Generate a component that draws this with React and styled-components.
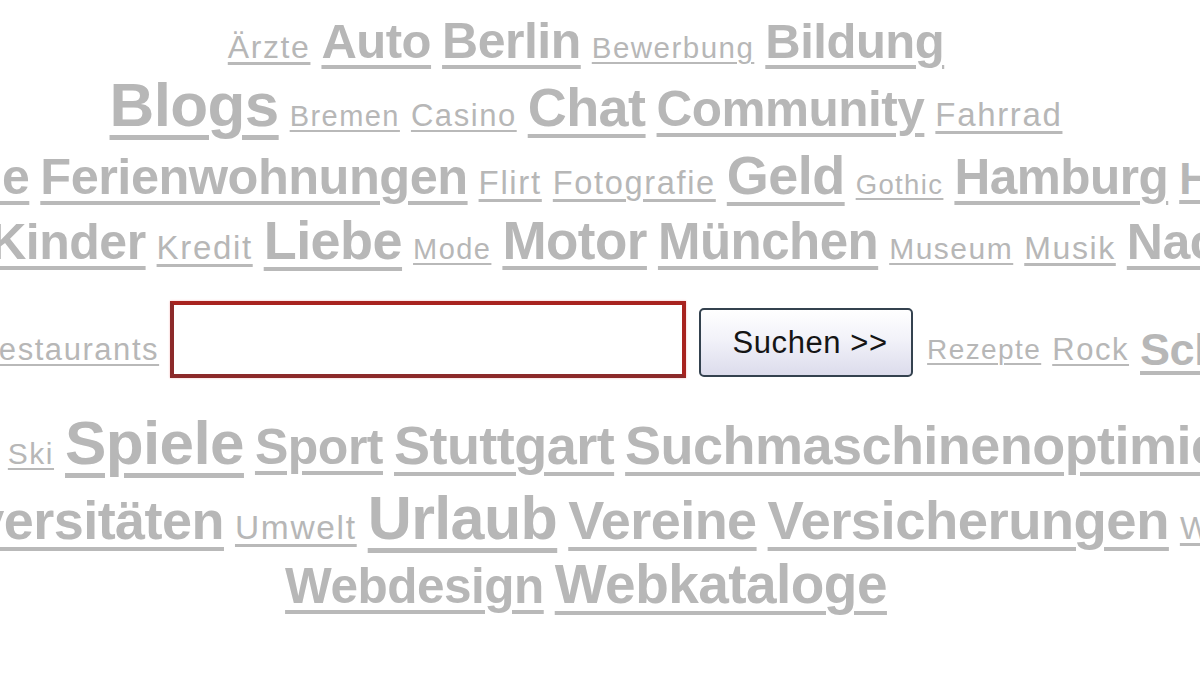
import React from 'react';
import styled, { createGlobalStyle } from 'styled-components';

const Global = createGlobalStyle`
	html, body {
		margin: 0;
		padding: 0;
		background: #ffffff;
		overflow: hidden;
	}
	body {
		font-family: "Liberation Sans", Arial, sans-serif;
	}
`;

const Page = styled.div`
	width: 1172px;
	padding-top: 16px;
`;

const Row = styled.div`
	display: flex;
	justify-content: center;
	align-items: baseline;
	gap: 11px;
	height: ${p => p.$h}px;
	white-space: nowrap;
`;

const Word = styled.a`
	flex-shrink: 0;
	display: block;
	font-size: ${p => p.$size}px;
	font-weight: ${p => (p.$bold ? 700 : 400)};
	letter-spacing: ${p => (p.$bold ? '-0.01em' : '0.05em')};
	line-height: 1;
	color: #b7b7b7;
	text-decoration: underline;
	text-decoration-color: #b9b9b9;
	text-decoration-thickness: 0.08em;
	text-underline-offset: 0.14em;
	cursor: pointer;
`;

const SideWord = styled(Word)`
	margin-top: 20px;
	margin-left: ${p => p.$push || 0}px;
`;

const SearchRow = styled.form`
	display: flex;
	justify-content: center;
	align-items: center;
	gap: 11px;
	height: 77px;
	margin: 23px 0 34px;
	white-space: nowrap;
`;

const Input = styled.input`
	flex-shrink: 0;
	box-sizing: border-box;
	width: 516px;
	height: 77px;
	margin: 0;
	border: 4px solid #a8231f;
	border-left-color: #8c2a2a;
	border-bottom-color: #8c2a2a;
	box-shadow: 0 0 2px #f5baba;
	background: #ffffff;
	outline: none;
`;

const Button = styled.button`
	flex-shrink: 0;
	box-sizing: border-box;
	width: 214px;
	height: 69px;
	margin: 0 0 1px 2px;
	padding: 0 0 0 8px;
	align-self: flex-end;
	border: 2px solid #34424f;
	border-radius: 5px;
	background: linear-gradient(#ffffff 0%, #f2f2f9 45%, #dcdcec 100%);
	font-family: "Liberation Sans", Arial, sans-serif;
	font-size: 31px;
	letter-spacing: 0.6px;
	color: #151515;
	cursor: pointer;
`;

const cloud = [
	{
		h: 58,
		words: [['Ärzte', 32], ['Auto', 49, 1], ['Berlin', 50, 1], ['Bewerbung', 29.5], ['Bildung', 49, 1]],
	},
	{
		h: 74,
		words: [['Blogs', 62, 1], ['Bremen', 29], ['Casino', 31], ['Chat', 54, 1], ['Community', 49.5, 1], ['Fahrrad', 33]],
	},
	{
		h: 65,
		words: [
			['Familie', 50, 1], ['Ferienwohnungen', 50.5, 1], ['Flirt', 33], ['Fotografie', 32.6],
			['Geld', 54, 1], ['Gothic', 27.5], ['Hamburg', 49.5, 1], ['Handy', 44, 1],
		],
	},
	{
		h: 65,
		words: [
			['Immobilien', 42, 1], ['Kinder', 50, 1], ['Kredit', 33], ['Liebe', 54, 1], ['Mode', 29],
			['Motor', 53, 1], ['München', 51, 1], ['Museum', 30], ['Musik', 32], ['Nachrichten', 50, 1],
		],
	},
];

const cloudBottom = [
	{
		h: 76,
		words: [
			['Shopping', 36, 1], ['Ski', 30], ['Spiele', 62, 1], ['Sport', 50, 1], ['Stuttgart', 54, 1],
			['Suchmaschinenoptimierung', 54, 1],
		],
	},
	{
		h: 69,
		words: [
			['Universitäten', 54, 1], ['Umwelt', 33.5], ['Urlaub', 61, 1], ['Vereine', 54, 1],
			['Versicherungen', 54.5, 1], ['Wetter', 32],
		],
	},
	{
		h: 60,
		words: [['Webdesign', 49.5, 1], ['Webkataloge', 55, 1]],
	},
];

const renderRows = rows =>
	rows.map((row, i) => (
		<Row key={i} $h={row.h}>
			{row.words.map(([text, size, bold]) => (
				<Word key={text} href="#" $size={size} $bold={!!bold}>
					{text}
				</Word>
			))}
		</Row>
	));

export default function App() {
	return (
		<>
			<Global />
			<Page>
				{renderRows(cloud)}
				<SearchRow onSubmit={e => e.preventDefault()}>
					<SideWord href="#" $size={22.5}>Reisen</SideWord>
					<SideWord href="#" $size={31}>Restaurants</SideWord>
					<Input type="text" />
					<Button type="submit">Suchen &gt;&gt;</Button>
					<SideWord href="#" $size={28} $push={3}>Rezepte</SideWord>
					<SideWord href="#" $size={31}>Rock</SideWord>
					<SideWord href="#" $size={45} $bold>Schule</SideWord>
				</SearchRow>
				{renderRows(cloudBottom)}
			</Page>
		</>
	);
}
